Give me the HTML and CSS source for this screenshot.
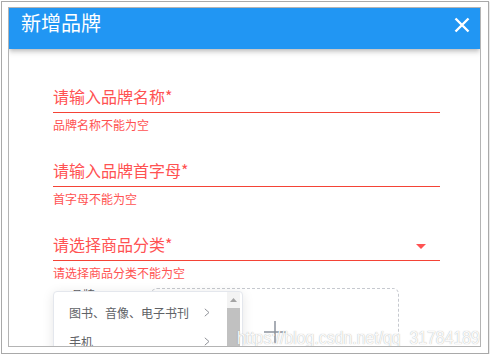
FILE: index.html
```html
<!DOCTYPE html>
<html>
<head>
<meta charset="utf-8">
<link rel="stylesheet" href="styles.css">
</head>
<body>
<div class="frame">
  <div class="dialog">
    <div class="toolbar">
      <div class="title">新增品牌</div>
      <svg class="close" width="16" height="16" viewBox="0 0 16 16"><path d="M1.5 1.5L14.5 14.5M14.5 1.5L1.5 14.5" stroke="#fff" stroke-width="2.4" fill="none"/></svg>
    </div>
    <div class="form">
      <div class="field">
        <div class="row"><span class="label">请输入品牌名称*</span></div>
        <div class="err">品牌名称不能为空</div>
      </div>
      <div class="field">
        <div class="row"><span class="label">请输入品牌首字母*</span></div>
        <div class="err">首字母不能为空</div>
      </div>
      <div class="field">
        <div class="row"><span class="label">请选择商品分类*</span>
          <svg class="drop" width="10" height="5" viewBox="0 0 10 5"><path d="M0 0L10 0L5 5z" fill="#ff5252"/></svg>
        </div>
        <div class="err">请选择商品分类不能为空</div>
      </div>
      <div class="upload-row">
        <div class="up-label">品牌</div>
        <div class="upload">
          <svg width="24" height="24" viewBox="0 0 24 24"><path d="M12 1V23M1 12H23" stroke="#8c939d" stroke-width="1.5" fill="none"/></svg>
        </div>
      </div>
    </div>
    <div class="menu">
      <ul class="list">
        <li class="item"><span>图书、音像、电子书刊</span><svg width="6" height="9" viewBox="0 0 6 9"><path d="M0.8 0.8L5 4.5L0.8 8.2" stroke="#909399" stroke-width="1" fill="none"/></svg></li>
        <li class="item"><span>手机</span><svg width="6" height="9" viewBox="0 0 6 9"><path d="M0.8 0.8L5 4.5L0.8 8.2" stroke="#909399" stroke-width="1" fill="none"/></svg></li>
      </ul>
      <div class="scroll">
        <div class="arrow"><svg width="7" height="4" viewBox="0 0 7 4"><path d="M0 4L3.5 0L7 4z" fill="#a3a3a3"/></svg></div>
        <div class="thumb"></div>
      </div>
    </div>
    <div class="watermark">https://blog.csdn.net/qq_31784189</div>
  </div>
</div>
</body>
</html>
```
FILE: styles.css
```css
html, body {
  margin: 0;
  padding: 0;
  background: #fff;
}
body {
  font-family: "Noto Sans CJK SC", "Noto Sans", sans-serif;
}
.frame {
  margin: 1px 0 0 1px;
  width: 488px;
  height: 353px;
  box-sizing: border-box;
  border: 1px solid #a9a9a9;
  padding: 5px 0 0 6px;
  box-shadow: 1px 1px 1px rgba(0,0,0,0.08);
}
.dialog {
  position: relative;
  width: 473px;
  height: 340px;
  box-sizing: border-box;
  border: 1px solid #b4b4b4;
  overflow: hidden;
  background: #fff;
}
.toolbar {
  position: relative;
  z-index: 1;
  height: 41px;
  box-sizing: border-box;
  background: #2196f3;
  display: flex;
  justify-content: space-between;
  align-items: flex-start;
  padding: 3px 10px 0 12px;
  box-shadow: 0 2px 4px -1px rgba(0,0,0,0.2), 0 4px 5px 0 rgba(0,0,0,0.12);
}
.title {
  color: #fff;
  font-size: 20px;
  line-height: 24px;
}
.close {
  display: block;
  margin-top: 6px;
}
.form {
  padding: 37px 40px 0 44px;
}
.field {
  margin-bottom: 28px;
}
.field:nth-child(3) {
  margin-bottom: 8px;
}
.row {
  display: flex;
  justify-content: space-between;
  line-height: 20px;
  padding-bottom: 6px;
  border-bottom: 1px solid #f44336;
}
.label {
  color: #ff5252;
  font-size: 16px;
}
.drop {
  display: block;
  align-self: flex-end;
  margin: 0 14px 5px 0;
}
.err {
  margin-top: 5px;
  font-size: 12px;
  line-height: 14px;
  color: #ff5252;
}
.upload-row {
  display: flex;
}
.up-label {
  width: 98px;
  box-sizing: border-box;
  padding-left: 18px;
  margin-top: 1px;
  font-size: 12px;
  line-height: 12px;
  color: #606266;
}
.upload {
  width: 248px;
  height: 88px;
  box-sizing: border-box;
  border: 1px dashed #c6c9cf;
  border-radius: 6px;
  display: flex;
  align-items: center;
  justify-content: center;
}
.upload svg {
  display: block;
}
.menu {
  position: absolute;
  z-index: 2;
  left: 44px;
  top: 283px;
  width: 190px;
  height: 110px;
  box-sizing: border-box;
  border: 1px solid #e4e7ed;
  border-radius: 4px;
  background: #fff;
  box-shadow: 0 2px 12px rgba(0,0,0,0.1);
  display: flex;
}
.list {
  list-style: none;
  margin: 0;
  padding: 6px 0 0 0;
  flex: 1;
}
.item {
  height: 29px;
  display: flex;
  align-items: center;
  justify-content: space-between;
  padding: 0 17px 0 15px;
  font-size: 12px;
  color: #606266;
}
.item svg {
  display: block;
}
.scroll {
  width: 13px;
  margin-right: 2px;
  display: flex;
  flex-direction: column;
  background: #f3f3f3;
}
.arrow {
  height: 16px;
  display: flex;
  align-items: center;
  justify-content: center;
}
.arrow svg {
  display: block;
}
.thumb {
  flex: 1;
  background: #c1c1c1;
}
.watermark {
  position: absolute;
  left: 228px;
  top: 320px;
  z-index: 5;
  white-space: nowrap;
  font-family: "Liberation Sans", sans-serif;
  font-size: 19px;
  line-height: 19px;
  color: rgba(255,255,255,0.95);
  text-shadow: 0 0 1px rgba(140,140,140,0.5), 0 0 1px rgba(140,140,140,0.35);
  transform: scaleX(0.833);
  transform-origin: left top;
}
```
